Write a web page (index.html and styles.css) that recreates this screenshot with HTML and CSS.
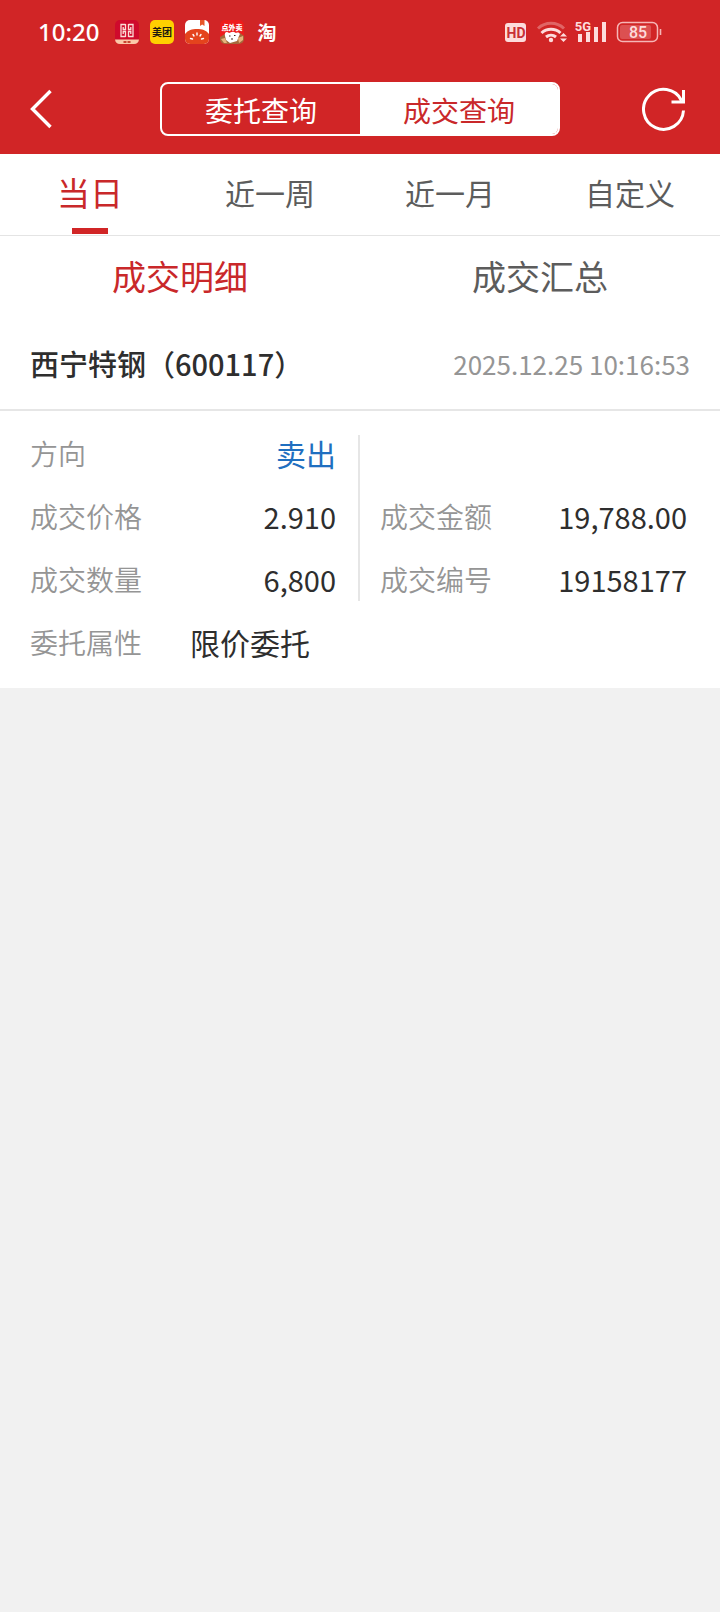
FILE: index.html
```html
<!DOCTYPE html>
<html lang="zh-CN">
<head>
<meta charset="utf-8">
<meta name="viewport" content="width=device-width, initial-scale=1">
<title>成交查询</title>
<link rel="stylesheet" href="styles.css">
</head>
<body>
<header class="top">
  <div class="status">
    <div class="status-side">
      <time class="clock">10:20</time>
      <svg class="app" viewBox="0 0 24 24" aria-hidden="true">
        <rect width="24" height="24" rx="5" fill="#cf0a2c"/>
        <path d="M0 19.500H24A5 5 0 0 1 19 24H5A5 5 0 0 1 0 19.500Z" fill="#fbc9a8"/>
        <path d="M10.500 4.500H6V16.500H10.500M13.500 4.500H18V16.500H13.500M10.500 4V9.500H8.200V7M13.500 4V9.500H15.800V7M10.500 17V11.500H8.200V14M13.500 17V11.500H15.800V14" fill="none" stroke="#fbdcd8" stroke-width="1.300"/>
        <path d="M8.500 22H11.500M12.500 22H15.500" stroke="#c8442f" stroke-width="2"/>
      </svg>
      <svg class="app" viewBox="0 0 24 24" aria-hidden="true">
        <rect width="24" height="24" rx="5" fill="#ffd000"/>
        <text x="12" y="16" class="mt">美团</text>
      </svg>
      <svg class="app" viewBox="0 0 24 24" aria-hidden="true">
        <rect width="24" height="24" rx="5" fill="#fff"/>
        <path d="M15 0H19.500V6L17.200 4.500L15 6Z" fill="#e8562a"/>
        <path d="M0 14C3 10 7 9 12 9S21 10 24 14V19A5 5 0 0 1 19 24H5A5 5 0 0 1 0 19Z" fill="#e4431d"/>
        <path d="M12 13V15M8 14.500L9 16M16 14.500L15 16M5.500 18.500L7.500 19M18.500 18.500L16.500 19" stroke="#fff" stroke-width="1.400" stroke-linecap="round"/>
      </svg>
      <svg class="app" viewBox="0 0 24 24" aria-hidden="true">
        <rect width="24" height="24" rx="5" fill="#ee1c1c"/>
        <path d="M0 17L5 14L20 13L24 16V19A5 5 0 0 1 19 24H5A5 5 0 0 1 0 19Z" fill="#a5683c"/>
        <path d="M5 16C4 12 7 11 9 13C11 11.500 15 11.500 16 13C19 11.500 21 14 19 16L17 21L10 23L6 20Z" fill="#fff"/>
        <path d="M9 16H10.500M14 15.500H15.500M11 19H13" stroke="#3b2420" stroke-width="1.200"/>
        <path d="M1 19L5 18L7 23H4ZM18 18L23 16V20L19 23Z" fill="#e6b47c"/>
        <text x="12" y="10" class="dwm">点外卖</text>
      </svg>
      <span class="tao">淘</span>
    </div>
    <svg class="signals" viewBox="0 0 160 26" role="img" aria-label="HD 5G 85%">
      <rect x="1" y="4" width="21" height="19" rx="3" fill="#fddcdc"/>
      <text x="12" y="19" class="hd">HD</text>
      <g fill="none" stroke="#fddcdc" stroke-width="3">
        <path d="M34 9.500A19 19 0 0 1 60 9.500" opacity=".35"/>
        <path d="M37.500 14A14 14 0 0 1 56.500 14"/>
        <path d="M42 18A8 8 0 0 1 52 18"/>
      </g>
      <circle cx="47" cy="21" r="2.200" fill="#fddcdc"/>
      <path d="M56 17.500L59.500 14L63 17.500ZM56 19.500L59.500 23L63 19.500Z" fill="#fddcdc"/>
      <text x="79" y="12" class="g5">5G</text>
      <path d="M74 15H78V23H74ZM82 13H86V23H82ZM90 8H94V23H90ZM98 3H102V23H98Z" fill="#fddcdc"/>
      <rect x="113.500" y="3.500" width="40" height="19" rx="5" fill="none" stroke="#f6b6b6" stroke-width="1.500"/>
      <rect x="116" y="6" width="31" height="14" rx="2" fill="#dc5051"/>
      <path d="M156.500 10V16" stroke="#f6b6b6" stroke-width="1.600"/>
      <text x="134" y="19" class="bat">85</text>
    </svg>
  </div>
  <div class="bar">
    <button class="icon-btn" aria-label="返回">
      <svg class="back" viewBox="0 0 22 40" aria-hidden="true"><path d="M18.500 2L0.500 20L18.500 38" fill="none" stroke="#fff" stroke-width="3.400"/></svg>
    </button>
    <div class="segment">
      <button class="seg">委托查询</button>
      <button class="seg seg-on">成交查询</button>
    </div>
    <button class="icon-btn" aria-label="刷新">
      <svg class="refresh" viewBox="0 0 46 46" aria-hidden="true"><path d="M41.500 24.500A20 20 0 1 1 39.500 14.500M41.500 4V16H29.500" fill="none" stroke="#fff" stroke-width="3"/></svg>
    </button>
  </div>
</header>
<main class="sheet">
  <nav class="ranges">
    <button class="range range-on">当日</button>
    <button class="range">近一周</button>
    <button class="range">近一月</button>
    <button class="range">自定义</button>
  </nav>
  <nav class="views">
    <button class="view view-on">成交明细</button>
    <button class="view">成交汇总</button>
  </nav>
  <article>
    <div class="stock">
      <h2 class="name">西宁特钢（600117）</h2>
      <time class="when">2025.12.25 10:16:53</time>
    </div>
    <div class="details">
      <dl class="col col-left">
        <div class="row"><dt>方向</dt><dd class="word sell">卖出</dd></div>
        <div class="row"><dt>成交价格</dt><dd>2.910</dd></div>
        <div class="row"><dt>成交数量</dt><dd>6,800</dd></div>
      </dl>
      <dl class="col col-right">
        <div class="row"><dt>成交金额</dt><dd>19,788.00</dd></div>
        <div class="row"><dt>成交编号</dt><dd>19158177</dd></div>
      </dl>
      <dl class="col col-wide">
        <div class="row row-start"><dt>委托属性</dt><dd class="word">限价委托</dd></div>
      </dl>
    </div>
  </article>
</main>
</body>
</html>
```
FILE: styles.css
```css
* { box-sizing: border-box; }

body {
  margin: 0;
  background: #f1f1f1;
  color: #2e2e2e;
  font-family: "Noto Sans CJK SC", sans-serif;
}

button {
  margin: 0;
  padding: 0;
  border: 0;
  background: none;
  color: inherit;
  font: inherit;
  cursor: pointer;
}

.top { background: #d12526; color: #fff; }

.status {
  display: flex;
  justify-content: space-between;
  align-items: center;
  height: 64px;
  padding: 0 56px 0 38px;
}

.status-side { display: flex; align-items: center; gap: 11px; }

.clock {
  margin-right: 5px;
  font-family: "Noto Sans", sans-serif;
  font-size: 24px;
  font-weight: 500;
  line-height: 32px;
}

.app { width: 24px; height: 24px; }
.mt { font-size: 10px; font-weight: 700; text-anchor: middle; fill: #1d1a10; }
.dwm { font-size: 7px; font-weight: 900; text-anchor: middle; fill: #fff; }
.tao { margin-left: 2px; font-size: 19px; font-weight: 700; line-height: 24px; }

.signals { width: 160px; height: 26px; }
.hd, .g5, .bat { font-family: Roboto, sans-serif; text-anchor: middle; }
.hd { font-size: 14px; font-weight: 700; fill: #c93036; }
.g5 { font-size: 13px; font-weight: 700; fill: #fddcdc; }
.bat { font-size: 16px; font-weight: 500; fill: #fddcdc; }

.bar {
  display: flex;
  justify-content: space-between;
  align-items: center;
  height: 90px;
  padding: 0 32px;
}

.icon-btn { display: flex; align-items: center; width: 46px; height: 54px; }
.back { width: 22px; height: 40px; overflow: visible; }
.refresh { width: 46px; height: 46px; }

.segment {
  display: flex;
  width: 61%;
  height: 54px;
  border: 2px solid #fff;
  border-radius: 8px;
  overflow: hidden;
}

.seg { flex: 1; padding-top: 2px; font-size: 28px; line-height: 48px; }
.seg-on { background: #fff; color: #c9282a; }

.sheet { background: #fff; }

.ranges {
  display: grid;
  grid-template-columns: repeat(4, 1fr);
  height: 82px;
  border-bottom: 1px solid #e4e4e4;
}

.range {
  position: relative;
  padding-bottom: 5px;
  color: #5c5c5c;
  font-size: 30px;
  line-height: 76px;
}

.range-on { color: #c9282a; font-size: 33px; }

.range-on::after {
  content: "";
  position: absolute;
  bottom: 1px;
  left: 50%;
  width: 36px;
  height: 6px;
  margin-left: -18px;
  background: #d12526;
}

.views { display: grid; grid-template-columns: 1fr 1fr; }
.view { padding-bottom: 2px; color: #5c5c5c; font-size: 34px; line-height: 80px; }
.view-on { color: #c9282a; }

.stock {
  display: flex;
  justify-content: space-between;
  align-items: center;
  padding: 0 30px;
  border-bottom: 2px solid #e6e6e6;
  line-height: 91px;
}

.name { margin: 0; font-size: 29px; font-weight: 500; }
.when { color: #959595; font-size: 26px; }

.details {
  display: grid;
  grid-template-columns: 1fr 1fr;
  row-gap: 23px;
  padding: 24px 0;
}

.col {
  display: flex;
  flex-direction: column;
  justify-content: flex-end;
  gap: 23px;
  margin: 0;
}

.col-left { padding: 0 22px 0 30px; border-right: 2px solid #e6e6e6; }
.col-right { padding: 0 33px 0 20px; }
.col-wide { grid-column: 1 / -1; padding: 0 30px; }

.row {
  display: flex;
  justify-content: space-between;
  align-items: center;
  padding-bottom: 4px;
  line-height: 36px;
}

.row-start { justify-content: flex-start; gap: 48px; }

dt { color: #959595; font-size: 28px; font-weight: 350; }
dd { margin: 0; font-size: 29px; }
.word { font-size: 30px; }
.sell { color: #1f6fc0; }
```
